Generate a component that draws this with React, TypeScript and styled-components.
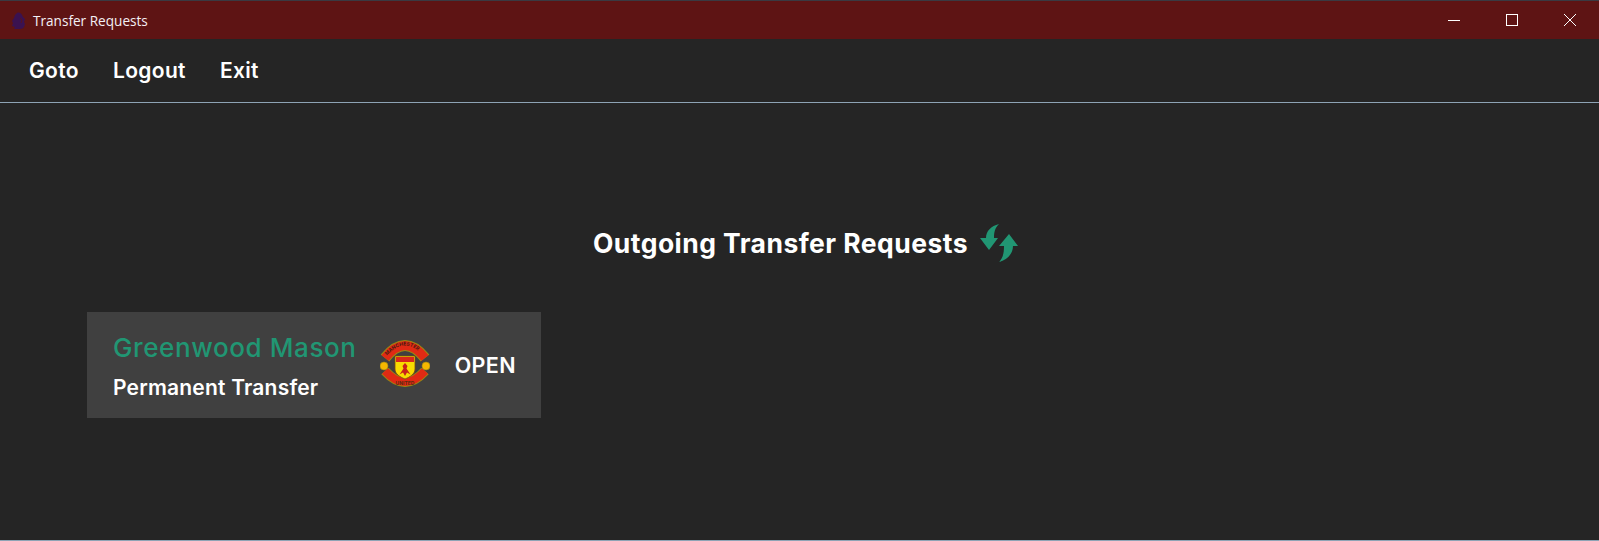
import React from 'react';
import styled, { createGlobalStyle } from 'styled-components';

const GlobalStyle = createGlobalStyle`
  html, body {
    margin: 0;
    padding: 0;
    background: #252525;
  }
`;

const Window = styled.div`
  display: flex;
  flex-direction: column;
  width: 1599px;
  height: 541px;
  box-sizing: border-box;
  overflow: hidden;
  background: #252525;
  border-top: 1px solid #3a3a42;
  border-bottom: 1px solid #8ea3b5;
  font-family: Inter, "Liberation Sans", sans-serif;
  color: #fff;
`;

const TitleBar = styled.div`
  display: flex;
  align-items: center;
  height: 38px;
  flex-shrink: 0;
  padding-left: 11px;
  background: #5e1414;
`;

const AppIcon = styled.svg`
  width: 15px;
  height: 17px;
  margin-right: 7px;
`;

const TitleText = styled.span`
  flex: 1;
  font-family: "Open Sans", "Liberation Sans", sans-serif;
  font-size: 13.6px;
  color: #f4f0f4;
`;

const WindowButton = styled.div`
  display: flex;
  align-items: center;
  justify-content: center;
  width: 58px;
  height: 38px;
`;

const MenuBar = styled.div`
  display: flex;
  align-items: center;
  gap: 34px;
  height: 64px;
  flex-shrink: 0;
  padding-left: 29px;
  box-sizing: border-box;
  border-bottom: 1px solid #8ea3b5;
`;

const MenuItem = styled.span`
  font-size: 21px;
  font-weight: 600;
  letter-spacing: 0.35px;
`;

const Content = styled.div`
  flex: 1;
  display: flex;
  flex-direction: column;
  padding: 119px 0 0 87px;
`;

const Heading = styled.div`
  display: flex;
  align-items: center;
  gap: 12px;
  height: 42px;
  padding-left: 506px;
`;

const HeadingText = styled.h1`
  margin: 0;
  font-size: 26.5px;
  font-weight: 700;
  letter-spacing: 0.45px;
  white-space: nowrap;
`;

const Card = styled.div`
  display: flex;
  align-items: center;
  width: 454px;
  height: 106px;
  box-sizing: border-box;
  margin-top: 48px;
  padding: 0 25px 0 26px;
  background: #404040;
`;

const CardText = styled.div`
  display: flex;
  flex-direction: column;
  gap: 13px;
  width: 267px;
  padding-top: 2px;
`;

const PlayerName = styled.div`
  font-size: 26px;
  font-weight: 500;
  letter-spacing: 0.6px;
  line-height: 30px;
  color: #219673;
  white-space: nowrap;
`;

const TransferType = styled.div`
  font-size: 21px;
  font-weight: 600;
  letter-spacing: 0.2px;
  line-height: 24px;
  white-space: nowrap;
`;

const Crest = styled.svg`
  width: 50px;
  height: 50px;
`;

const Status = styled.div`
  margin-left: auto;
  font-size: 21.5px;
  font-weight: 600;
  letter-spacing: 0.4px;
`;

const LionIcon = () => (
  <AppIcon viewBox="0 0 15 17">
    <path
      d="M6 1c2-1 4 0 5 2l1 2 2 2-1 3 1 2-1 3c-1 2-4 2-6 2H3l1-2-3-1 1-3-1-2 2-3 1-3z"
      fill="#3a1250"
    />
    <path d="M9 6l2 2-1 3" fill="none" stroke="#5e1414" strokeWidth="0.8" />
  </AppIcon>
);

const TransferIcon = () => (
  <svg width="40" height="40" viewBox="0 0 40 40" fill="#219673">
    <path d="M19 1C11 3 6 8 6 15H0l9 12 9-12h-4c0-6 1-10 5-14z" />
    <path d="M19 39c8-2 14-8 14-16h5L29 11 19 23h5c0 7-1 12-5 16z" />
  </svg>
);

const ManUtdCrest = () => (
  <Crest viewBox="0 0 50 50">
    <path d="M5 18Q25 -7 45 18" fill="none" stroke="#9a8a10" strokeWidth="11" />
    <path d="M5 31Q25 53 45 31" fill="none" stroke="#9a8a10" strokeWidth="10" />
    <path id="crest-top" d="M5 18Q25 -7 45 18" fill="none" stroke="#e02a14" strokeWidth="9" />
    <path d="M5 31Q25 53 45 31" fill="none" stroke="#e02a14" strokeWidth="8" />
    <text fontFamily="Inter, sans-serif" fontSize="5" fontWeight="700" fill="#4a1a10">
      <textPath href="#crest-top" startOffset="3">MANCHESTER</textPath>
    </text>
    <text x="25" y="45" textAnchor="middle" fontFamily="Inter, sans-serif" fontSize="5" fontWeight="700" fill="#5a2a10">
      UNITED
    </text>
    <circle cx="4" cy="26" r="4" fill="#f5b800" stroke="#9a8a10" strokeWidth="0.6" />
    <circle cx="46" cy="26" r="4" fill="#f5b800" stroke="#9a8a10" strokeWidth="0.6" />
    <path d="M15 16h20v13c0 5-5 8-10 10-5-2-10-5-10-10z" fill="#f8dc00" stroke="#7a4a10" strokeWidth="0.8" />
    <rect x="16" y="17" width="18" height="5" fill="#d8281a" />
    <path d="M25 23l2.5 3-1 2.5 4 6-3.5-2-2 3.5-2-3.5-3.5 2 4-6-1-2.5z" fill="#c8201a" />
  </Crest>
);

const App: React.FC = () => {
  return (
    <Window>
      <GlobalStyle />
      <TitleBar>
        <LionIcon />
        <TitleText>Transfer Requests</TitleText>
        <WindowButton>
          <svg width="12" height="12" viewBox="0 0 12 12">
            <path d="M0 6.5h12" stroke="#fff" strokeWidth="1" />
          </svg>
        </WindowButton>
        <WindowButton>
          <svg width="12" height="12" viewBox="0 0 12 12">
            <rect x="0.5" y="0.5" width="11" height="11" fill="none" stroke="#fff" strokeWidth="1" />
          </svg>
        </WindowButton>
        <WindowButton>
          <svg width="12" height="12" viewBox="0 0 12 12">
            <path d="M0 0l12 12M12 0L0 12" stroke="#fff" strokeWidth="1" />
          </svg>
        </WindowButton>
      </TitleBar>
      <MenuBar>
        <MenuItem>Goto</MenuItem>
        <MenuItem>Logout</MenuItem>
        <MenuItem>Exit</MenuItem>
      </MenuBar>
      <Content>
        <Heading>
          <HeadingText>Outgoing Transfer Requests</HeadingText>
          <TransferIcon />
        </Heading>
        <Card>
          <CardText>
            <PlayerName>Greenwood Mason</PlayerName>
            <TransferType>Permanent Transfer</TransferType>
          </CardText>
          <ManUtdCrest />
          <Status>OPEN</Status>
        </Card>
      </Content>
    </Window>
  );
};

export default App;
